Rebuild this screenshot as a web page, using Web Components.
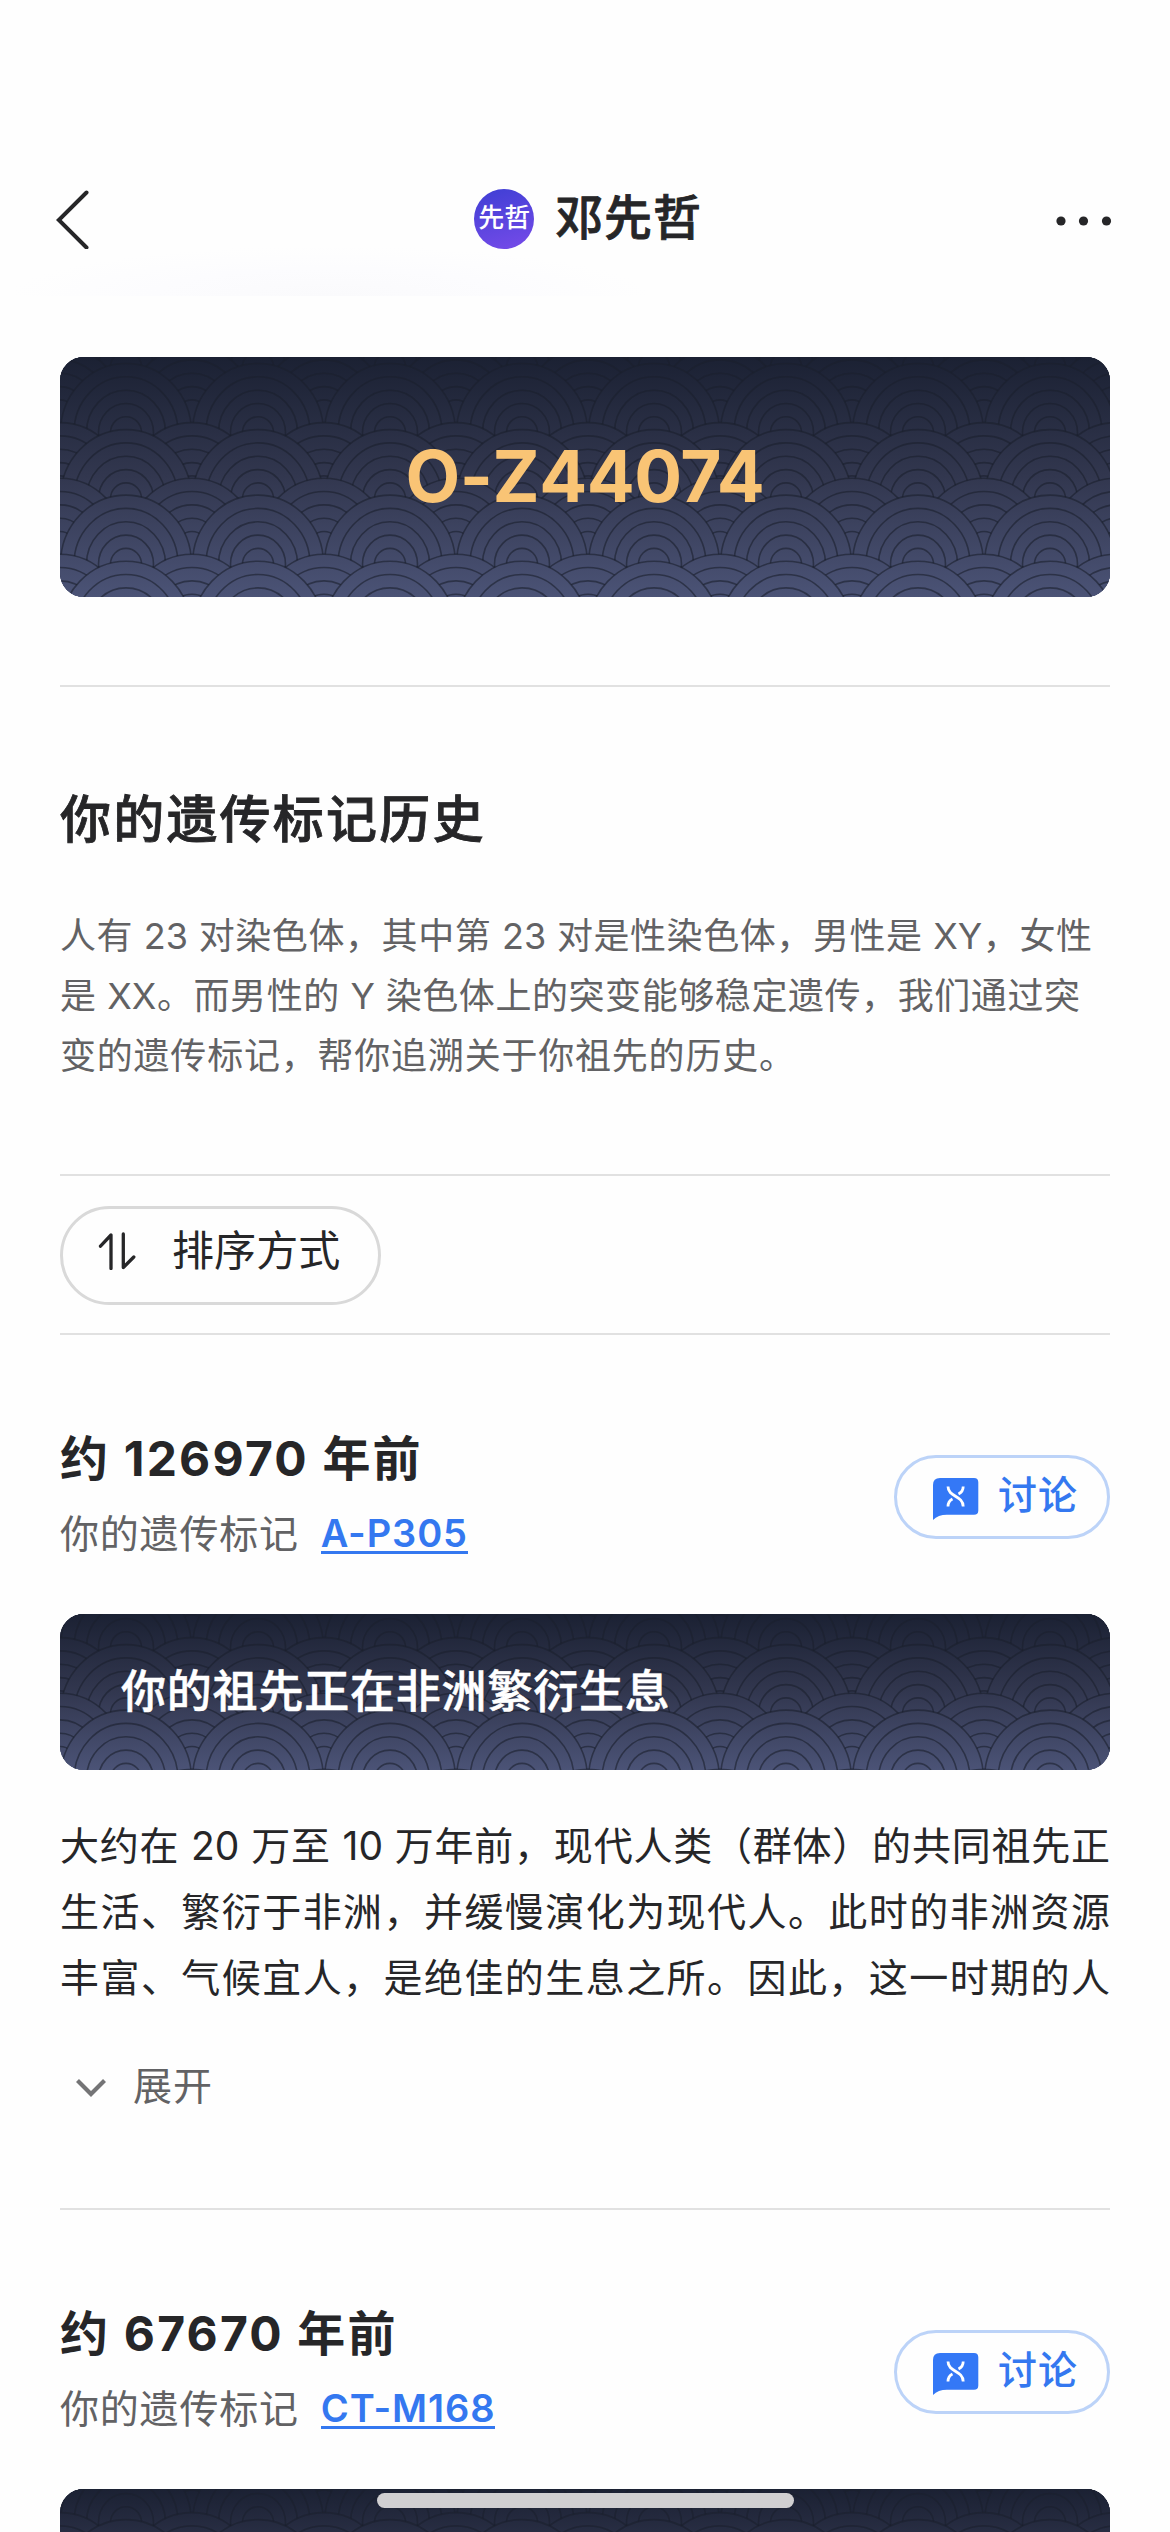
<!DOCTYPE html>
<html lang="zh-CN">
<head>
<meta charset="utf-8">
<title>邓先哲</title>
<style>
html,body{margin:0;padding:0;background:#fefefe}
body{width:1170px;height:2532px;overflow:hidden;font-family:Inter,"Noto Sans CJK SC",sans-serif;color:#262628;-webkit-font-smoothing:antialiased}
</style>
</head>
<body>
<app-page></app-page>
<script>
const define=(name,html,setup)=>customElements.define(name,class extends HTMLElement{
  connectedCallback(){
    if(this.shadowRoot)return;
    const t=document.createElement('template');
    t.innerHTML=html;
    this.attachShadow({mode:'open'}).appendChild(t.content.cloneNode(true));
    if(setup)setup(this,this.shadowRoot);
  }
});

// One line of text spread evenly over the width given by --w.
define('text-line',`<style>
:host{display:block;width:var(--w);white-space:nowrap;text-align:justify;text-align-last:justify}
</style><slot></slot>`);

// Seigaiha wave card: overlapping ringed scales over a vertical gradient.
define('wave-banner',`<style>
:host{display:grid;height:var(--h,156px);border-radius:24px;overflow:hidden;flex:none}
svg,.c{grid-area:1/1;min-width:0}
svg{align-self:center}
.bg{display:block;width:1050px}
.c{display:flex;align-items:center}
</style><svg class="bg"></svg><div class="c"><slot></slot></div>`,(el,root)=>{
  const h=+el.getAttribute('height')||156, dy=-(240-h)/2;
  el.style.setProperty('--h',h+'px');
  const rx=[65.5,52,39.5,27.5,15.5], ry=[69,55.7,42.3,29,15.7];
  const rows=[];
  for(let b=-132;b<264;b+=131.6)
    rows.push([b-10,0],[b+6.9,66],[b+66,0],[b+73,66]);
  rows.sort((a,b)=>a[0]-b[0]);
  let s='';
  for(const [top,ox] of rows)
    for(let x=ox;x<1140;x+=132)
      rx.forEach((r,i)=>s+=`<ellipse cx="${x}" cy="${(top+dy+69).toFixed(1)}" rx="${r}" ry="${ry[i]}" ${i?'fill="none"':'fill="url(#g)"'}/>`);
  const svg=root.querySelector('svg');
  svg.setAttribute('viewBox',`0 0 1050 ${h}`);
  svg.setAttribute('height',h);
  svg.innerHTML=`<defs><linearGradient id="g" gradientUnits="userSpaceOnUse" x1="0" y1="0" x2="0" y2="${h}">
  <stop offset="0" stop-color="#1b2133"/><stop offset=".5" stop-color="#32374f"/><stop offset="1" stop-color="#4b5376"/></linearGradient></defs>
  <rect width="1050" height="${h}" fill="url(#g)"/><g stroke="#1b202d" stroke-opacity=".6" stroke-width="1.6">${s}</g>`;
});

define('nav-bar',`<style>
:host{display:block;height:296px;box-sizing:border-box;padding:189px 56px 0;background:
 radial-gradient(ellipse 320px 50px at 330px 296px,#fafafc 0,#fcfcfe 55%,transparent 100%)}
.r{display:grid;grid-template-columns:1fr auto 1fr;align-items:center;height:60px}
.t{display:flex;align-items:center;gap:21px;height:60px;transform:translateX(3px)}
.a{width:60px;height:60px;border-radius:50%;background:linear-gradient(165deg,#4440d6 10%,#774be9);color:#fff;font-size:26px;font-weight:500;line-height:57px;text-align:center}
.n{font-size:48px;font-weight:500;line-height:58px;letter-spacing:.8px;padding-bottom:2px;-webkit-text-stroke:.8px #262628}
.m{justify-self:end}
svg{display:block}
</style><div class="r">
<svg width="34" height="60" viewBox="0 0 34 60" fill="none" stroke="#262628" stroke-width="4" stroke-linecap="round" stroke-linejoin="miter"><path d="M30.500 3.500L2.800 31 30.500 58.500"/></svg>
<div class="t"><div class="a">先哲</div><div class="n">邓先哲</div></div>
<svg class="m" width="60" height="60" viewBox="0 0 60 60" fill="#262628"><circle cx="7" cy="32" r="4.600"/><circle cx="29.500" cy="32" r="4.600"/><circle cx="52.500" cy="32" r="4.600"/></svg>
</div>`);

define('rule-line',`<style>:host{display:block;height:2px;background:#e1e1e1;flex:none}</style>`);

define('sort-button',`<style>
:host{display:flex;width:321px;height:99px;box-sizing:border-box;border:3px solid #d9d9d9;border-radius:50px;align-items:center;padding:0 0 10px 35px;gap:36px;font-size:42px;letter-spacing:.1px;line-height:60px}
svg{display:block}
</style><svg width="38" height="38" viewBox="0 0 38 38" fill="none" stroke="#262628" stroke-width="3.300" stroke-linecap="round" stroke-linejoin="round"><path d="M2.500 14.200L13 3V36.500M25.300 2V35.500L35.800 25"/></svg><span><slot></slot></span>`);

define('discuss-button',`<style>
:host{display:flex;width:216px;height:84px;box-sizing:border-box;border:3px solid #bcd3f8;border-radius:42px;align-items:center;padding:0 0 4px 36px;gap:19px;color:#3478f0;font-size:39px;font-weight:500;letter-spacing:1px;flex:none;line-height:60px}
svg{display:block;margin-top:7px;flex:none}
</style><svg width="46" height="42" viewBox="0 0 46 42"><path fill="#3478f6" d="M0 42V7Q0 0 7 0H41Q45.300 0 45.300 4.300V32.400Q45.300 36.700 41 36.700H14Q5 36.700 0 42Z"/><path fill="none" stroke="#fff" stroke-width="2.800" d="M15 8.500C15 19 30.200 17.500 30.200 28.500M30.200 8.500C30.200 12 28.500 14.500 25.500 16M15 28.500C15 25 16.500 22.500 19.500 21"/></svg><slot></slot>`);

define('history-card',`<style>
:host{display:flex;flex-direction:column;height:873px;flex:none}
.h{display:flex;justify-content:space-between;height:182px;margin-top:97px;flex:none}
.d{font-size:48px;font-weight:700;line-height:54px;white-space:nowrap;letter-spacing:2.200px}
.s{display:flex;gap:22px;font-size:39px;line-height:50px;color:#626264;margin-top:23px}
.s span{letter-spacing:.8px}
a{color:#3478f0;font-size:38px;font-weight:600;white-space:nowrap;height:42px;line-height:49px;border-bottom:3px solid #3478f0;letter-spacing:.9px}
discuss-button{margin-top:23px}
.b{font-size:45px;font-weight:500;color:#fff;padding:0 0 1px 61px;letter-spacing:.8px;line-height:66px;-webkit-text-stroke:.5px #fff}
</style><div class="h"><div><div class="d"><slot name="date"></slot></div><div class="s"><span>你的遗传标记</span><a><slot name="marker"></slot></a></div></div><discuss-button>讨论</discuss-button></div>
<wave-banner height="156"><div class="b"><slot name="title"></slot></div></wave-banner>
<slot></slot>`);

define('expand-toggle',`<style>
:host{display:flex;align-items:center;gap:26px;padding-left:15px;font-size:39px;letter-spacing:1px;color:#626264;line-height:60px;height:60px}
svg{display:block;margin-top:3px}
</style><svg width="32" height="20" viewBox="0 0 32 20" fill="none" stroke="#747476" stroke-width="4.200"><path d="M2.500 2.500L16 16 29.500 2.500"/></svg><slot></slot>`);

define('home-indicator',`<style>:host{display:block;position:fixed;left:377px;top:2493px;width:417px;height:15px;border-radius:8px;background:#d0cfd1}</style>`);

define('app-page',`<style>
:host{display:block;height:2532px;overflow:hidden}
main{display:flex;flex-direction:column;padding:61px 60px 0}
.z{width:100%;text-align:center;font-size:71px;font-weight:700;color:#f9c475;letter-spacing:-.5px;line-height:80px;padding-bottom:3px}
h1{margin:100px 0 0;font-size:51px;font-weight:500;line-height:66px;height:66px;letter-spacing:2.200px;-webkit-text-stroke:.8px #262628}
.p1{margin:53px 0 88px;font-size:36px;line-height:60px;color:#626264}
.p2{margin:43px 0 45px;font-size:39px;line-height:66px;--w:1050px}
sort-button{margin:30px 0 28px}
</style>
<nav-bar></nav-bar>
<main>
<wave-banner height="240"><div class="z">O-Z44074</div></wave-banner>
<rule-line style="margin-top:88px"></rule-line>
<h1>你的遗传标记历史</h1>
<div class="p1">
<text-line style="--w:1032px">人有 23 对染色体，其中第 23 对是性染色体，男性是 XY，女性</text-line>
<text-line style="--w:1020px">是 XX。而男性的 Y 染色体上的突变能够稳定遗传，我们通过突</text-line>
<text-line style="--w:735px">变的遗传标记，帮你追溯关于你祖先的历史。</text-line>
</div>
<rule-line></rule-line>
<sort-button>排序方式</sort-button>
<rule-line></rule-line>
<history-card><span slot="date">约 126970 年前</span><span slot="marker">A-P305</span><span slot="title">你的祖先正在非洲繁衍生息</span>
<div class="p2">
<text-line>大约在 20 万至 10 万年前，现代人类（群体）的共同祖先正</text-line>
<text-line>生活、繁衍于非洲，并缓慢演化为现代人。此时的非洲资源</text-line>
<text-line>丰富、气候宜人，是绝佳的生息之所。因此，这一时期的人</text-line>
</div>
<expand-toggle>展开</expand-toggle>
</history-card>
<rule-line></rule-line>
<history-card><span slot="date">约 67670 年前</span><span slot="marker">CT-M168</span></history-card>
</main>
<home-indicator></home-indicator>`);
</script>
</body>
</html>
